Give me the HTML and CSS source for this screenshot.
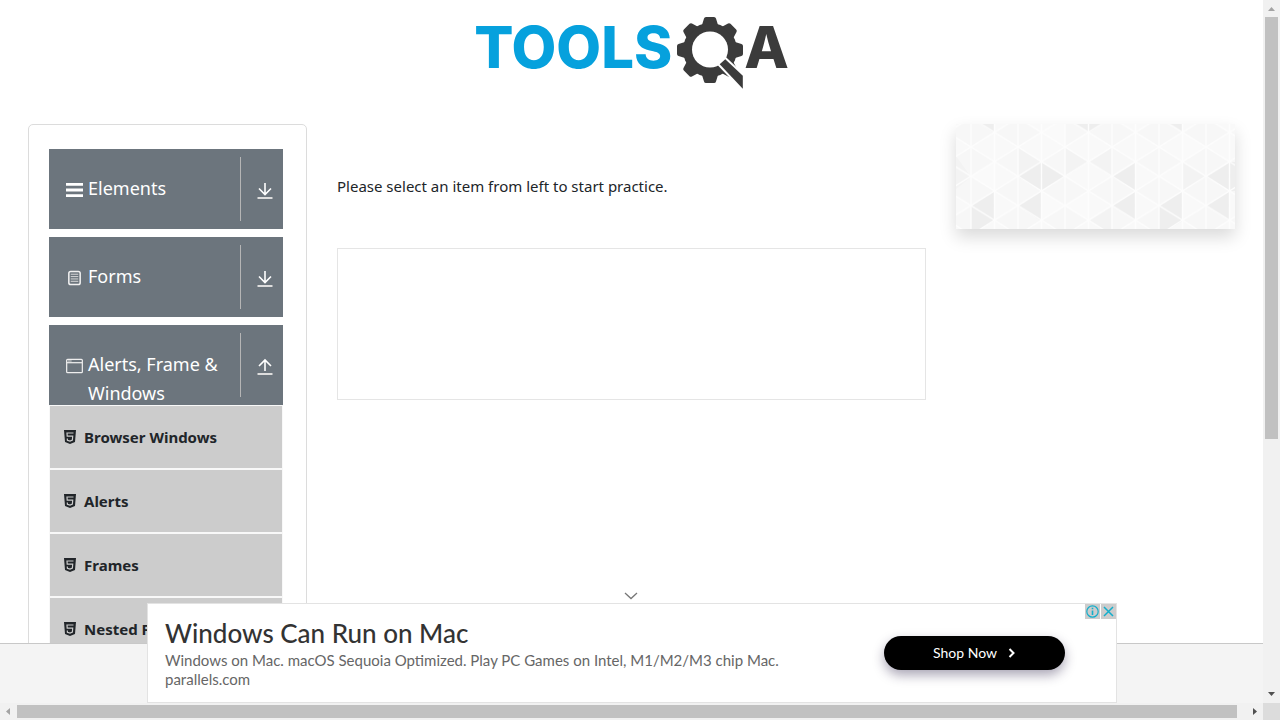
FILE: index.html
```html
<!DOCTYPE html>
<html lang="en">
<head>
<meta charset="utf-8">
<title>ToolsQA</title>
<link rel="stylesheet" href="styles.css">
</head>
<body>
<svg class="defs" width="0" height="0" aria-hidden="true">
  <symbol id="html5" viewBox="0 0 12 14"><path fill="#212529" d="M0 0h12l-1 12-5 2-5-2z"/><path fill="none" stroke="#ccc" stroke-width="1.200" d="M9.500 3H3l.2 3.200h5.500l-.3 3.900L6 11l-2.600-.8-.1-1.700"/></symbol>
  <symbol id="down" viewBox="0 0 16 18"><path fill="none" stroke="#fff" stroke-width="1.600" d="M8 1v11M2 6.500l6 6 6-6"/><path stroke="#ddd" stroke-width="2" d="M.5 16h15"/></symbol>
  <symbol id="up" viewBox="0 0 16 18"><path fill="none" stroke="#fff" stroke-width="1.600" d="M8 13V2M2 8l6-6 6 6"/><path stroke="#ddd" stroke-width="2" d="M.5 16h15"/></symbol>
</svg>
<div class="pane">
  <header class="header">
    <a class="logo" href="#" aria-label="ToolsQA">
      <span class="logo-tools">TOOLS</span>
      <svg class="logo-gear" viewBox="0 0 68 74" aria-hidden="true">
        <g fill="#3b3b3b" transform="translate(34 34)">
          <circle r="27"/>
          <g id="teeth"><path id="tooth" d="M-8-25l2-6.500q.4-1.500 2-1.500h8q1.600 0 2 1.500l2 6.500z"/><use href="#tooth" transform="rotate(45)"/><use href="#tooth" transform="rotate(90)"/><use href="#tooth" transform="rotate(135)"/></g>
          <use href="#teeth" transform="rotate(180)"/>
        </g>
        <circle cx="34" cy="33.500" r="18" fill="#fff"/>
        <path fill="#3b3b3b" stroke="#fff" stroke-width="4" paint-order="stroke" d="M43.700 48.300l5.600-5 17.500 16.500v13z"/>
      </svg>
      <span class="logo-a">A</span>
    </a>
  </header>
  <main class="layout">
    <nav class="sidebar">
      <button class="group" type="button">
        <svg class="group-icon" viewBox="0 0 18 18"><path stroke="#fff" stroke-width="3" d="M0 3h18M0 9h18M0 15h18"/></svg>
        <span class="group-name">Elements</span>
        <span class="group-toggle"><svg class="arrow"><use href="#down"/></svg></span>
      </button>
      <button class="group" type="button">
        <svg class="group-icon" viewBox="0 0 18 18"><rect x="3" y="2" width="12" height="14" rx="2" fill="none" stroke="#f1f1f1" stroke-width="1.600"/><path stroke="#ddd" d="M5 5h8M5 7.500h8M5 10h8M5 12.500h8"/></svg>
        <span class="group-name">Forms</span>
        <span class="group-toggle"><svg class="arrow"><use href="#down"/></svg></span>
      </button>
      <section>
        <button class="group" type="button">
          <svg class="group-icon" viewBox="0 0 18 18"><rect x=".7" y="2" width="16.600" height="14" rx="1" fill="none" stroke="#eee" stroke-width="1.300"/><path stroke="#eee" stroke-width="1.300" d="M1 5.500h16"/><path stroke="#ddd" d="M2 3.700h4"/></svg>
          <span class="group-name">Alerts, Frame &amp; Windows</span>
          <span class="group-toggle"><svg class="arrow"><use href="#up"/></svg></span>
        </button>
        <ul class="menu">
          <li><a class="item" href="#"><svg class="item-icon"><use href="#html5"/></svg>Browser Windows</a></li>
          <li><a class="item" href="#"><svg class="item-icon"><use href="#html5"/></svg>Alerts</a></li>
          <li><a class="item" href="#"><svg class="item-icon"><use href="#html5"/></svg>Frames</a></li>
          <li><a class="item" href="#"><svg class="item-icon"><use href="#html5"/></svg>Nested Frames</a></li>
        </ul>
      </section>
    </nav>
    <div class="content">
      <p class="prompt">Please select an item from left to start practice.</p>
      <div class="slot"></div>
    </div>
    <aside>
      <svg class="banner" viewBox="0 0 279 105" preserveAspectRatio="none" aria-hidden="true">
        <defs><pattern id="mesh" x="15" y="23" width="47" height="29.300" patternUnits="userSpaceOnUse">
          <path fill="#f7f7f7" d="M0 0v29.300l23.500-14.650zM23.500 14.650L47 0v29.300z"/>
        </pattern>
        <pattern id="lines" x="15" y="23" width="47" height="29.300" patternUnits="userSpaceOnUse">
          <path fill="none" stroke="#fdfdfd" stroke-width="1.300" d="M0 0v29.300M47 0v29.300M23.500 0v29.300M0 0l47 29.300M47 0L0 29.300"/>
        </pattern></defs>
        <rect width="279" height="105" fill="#f9f9f9"/>
        <rect width="279" height="105" fill="url(#mesh)"/>
        <path fill="#fafafa" d="M62 82l23-15 24 15-24 15zM109 82l24-15v30zM85 9l24-15v29zM227 9l23 14-23 15zM15 53l23-15v29z"/>
        <path fill="#f3f3f3" d="M109 23v30l24-15zM133 38l23-15v30zM62 23v30l23-15zM227 38v29l23-14zM133 97l23-15v29zM0 32l15 21-15 12z"/>
        <path fill="#eee" d="M15 82l23-15v30zM62 53l23-15 24 15-24 14zM62 82l23-15v30zM156 53l24-15v29zM156 82l24-15v30zM203 82l24-15v30zM250 53l24-15h5v29h-5zM250 82l24-15v30zM15 82v29l23-14zM203 82v29l24-14zM15-6l23-14V9zM109-6h47l-23 15zM203-6l24-14V9z"/>
        <rect width="279" height="105" fill="url(#lines)"/>
      </svg>
    </aside>
  </main>
  <footer class="footer"></footer>
  <section class="ad" aria-label="Advertisement">
    <button class="collapse" type="button" aria-label="Collapse"><svg viewBox="0 0 14 8"><path fill="none" stroke="#777" stroke-width="1.300" d="M1 1l6 5.500L13 1"/></svg></button>
    <div class="ad-copy">
      <a class="ad-title" href="#">Windows Can Run on Mac</a>
      <p class="ad-text">Windows on Mac. macOS Sequoia Optimized. Play PC Games on Intel, M1/M2/M3 chip Mac.</p>
      <p class="ad-text">parallels.com</p>
    </div>
    <button class="shop" type="button">Shop Now<svg class="chevron" viewBox="0 0 8 10"><path fill="none" stroke="#fff" stroke-width="2" d="M1.500 1l4 4-4 4"/></svg></button>
    <div class="ad-marks">
      <button type="button" aria-label="Ad info"><svg viewBox="0 0 15 15"><circle cx="7.500" cy="7.500" r="5.700" fill="none" stroke="#13aecb" stroke-width="1.200"/><path stroke="#13aecb" stroke-width="1.600" d="M7.500 6.500V11M7.500 3.800v1.500"/></svg></button>
      <button type="button" aria-label="Close ad"><svg viewBox="0 0 15 15"><path stroke="#13aecb" stroke-width="1.500" d="M3 3l9 9M12 3l-9 9"/></svg></button>
    </div>
  </section>
</div>
<div class="bar bar-v"><svg viewBox="0 0 17 17"><path fill="#a3a3a3" d="M5 11h7L8.500 7z"/></svg><div class="track"><div class="thumb"></div></div><svg viewBox="0 0 17 17"><path fill="#505050" d="M5 6h7l-3.500 4z"/></svg></div>
<div class="bar bar-h"><svg viewBox="0 0 17 17"><path fill="#a3a3a3" d="M10 5v7L6 8.500z"/></svg><div class="track"><div class="thumb"></div></div><svg viewBox="0 0 17 17"><path fill="#505050" d="M7 5v7l4-3.500z"/></svg></div>
<div class="corner"></div>
</body>
</html>
```
FILE: styles.css
```css
* { box-sizing: border-box; }
body {
  margin: 0;
  height: 100vh;
  display: grid;
  grid-template: minmax(0, 1fr) 17px / minmax(0, 1fr) 17px;
  background: #fff;
  color: #212529;
  font: 15px/24px "Noto Sans", "Open Sans", sans-serif;
  overflow: hidden;
}
button { border: 0; padding: 0; background: none; font: inherit; color: inherit; cursor: pointer; }
a { color: inherit; text-decoration: none; }
p, ul { margin: 0; padding: 0; }
svg { display: block; }
.defs { position: absolute; }

.pane { position: relative; display: flex; flex-direction: column; overflow: hidden; }
.header { display: flex; justify-content: center; padding: 16px 0 34px; flex: none; }
.logo { display: flex; height: 74px; color: #3b3b3b; font: 800 58px/62px Inter, sans-serif; }
.logo-tools { color: #06a1dd; }
.logo-gear { width: 68px; height: 74px; margin-left: 4px; }

.layout {
  flex: 1;
  min-height: 0;
  display: grid;
  grid-template-columns: 279px minmax(0, 1fr) 279px;
  gap: 30px;
  padding: 0 28px;
}
.sidebar {
  display: flex;
  flex-direction: column;
  gap: 8px;
  padding: 24px 23px 24px 20px;
  border: 1px solid #dcdcdc;
  border-radius: 5px;
  height: max-content;
}
.group {
  display: flex;
  width: 100%;
  height: 80px;
  padding: 8px 0 0 17px;
  background: #6c757d;
  color: #fff;
  font-size: 18px;
  line-height: 29px;
  text-align: left;
  align-items: flex-start;
  overflow: hidden;
}
.group-icon { width: 17px; height: 18px; margin: 24px 5px 0 0; flex: none; }
.group-name { flex: 1; padding-top: 17px; }
.group-toggle { width: 43px; height: 64px; padding: 25px 0 0 16px; border-left: 1px solid #b5b5b5; }
.arrow { width: 16px; height: 18px; }
.menu { list-style: none; border: 1px solid #f8f8f8; border-top: 0; }
.item {
  display: flex;
  align-items: center;
  gap: 8px;
  height: 64px;
  padding: 0 14px;
  border: solid #f8f8f8;
  border-width: 1px 0;
  background: #ccc;
  font-weight: 700;
}
.item-icon { width: 12px; height: 14px; }

.prompt { padding-top: 50px; }
.slot { height: 152px; margin-top: 50px; border: 1px solid #e5e5e5; }
.banner { width: 100%; height: 105px; box-shadow: 0 8px 16px rgba(0, 0, 0, .15); }
.footer { position: relative; flex: none; height: 60px; border-top: 1px solid #c8c8c8; background: #f4f4f4; }

.ad {
  position: absolute;
  left: 147px;
  right: 146px;
  bottom: 0;
  height: 100px;
  display: flex;
  align-items: center;
  justify-content: space-between;
  padding: 0 51px 0 17px;
  border: 1px solid #e3e3e3;
  background: #fff;
}
.collapse { position: absolute; left: 476px; top: -12px; width: 14px; height: 8px; }
.ad-title { display: block; padding-bottom: 3px; color: #333; font: 500 26px/30px Lato, sans-serif; }
.ad-text { color: #666; font: 15px/19px Lato, sans-serif; }
.shop {
  display: flex;
  align-items: center;
  justify-content: center;
  gap: 11px;
  width: 181px;
  height: 34px;
  border-radius: 17px;
  background: #000;
  color: #fff;
  font: 14px/18px Lato, sans-serif;
  box-shadow: 0 5px 12px rgba(40, 30, 70, .4);
}
.chevron { width: 8px; height: 10px; }
.ad-marks { position: absolute; top: 0; right: 0; display: flex; gap: 1px; }
.ad-marks button { width: 15px; height: 15px; background: #ccc; }

.bar { display: flex; background: #f1f1f1; }
.bar svg { width: 17px; height: 17px; flex: none; }
.track { flex: 1; }
.thumb { background: #c1c1c1; }
.bar-v { flex-direction: column; }
.bar-v .thumb { width: 13px; height: 63.1%; margin: 0 auto; }
.bar-h .track { padding: 2px 0; }
.bar-h .thumb { width: 99.3%; height: 13px; }
.corner { background: #dcdcdc; }
```
